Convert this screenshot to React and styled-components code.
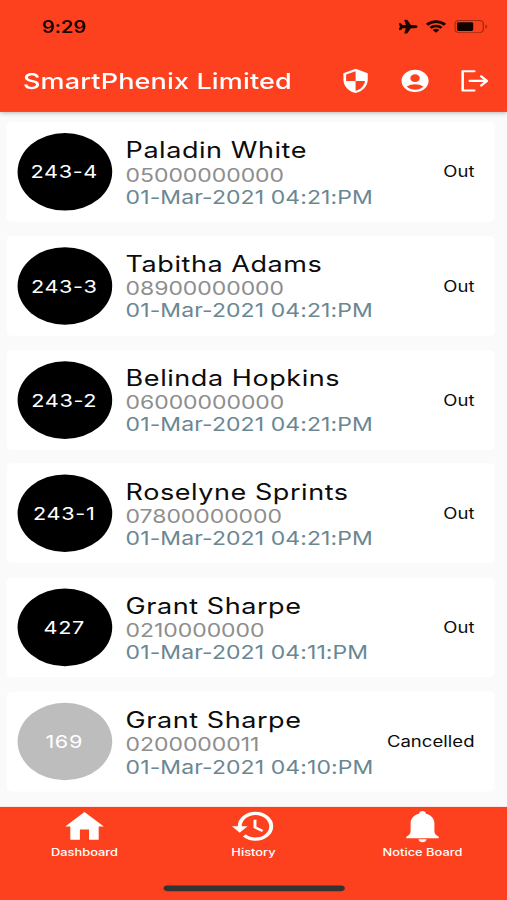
import React, { useState } from "react";
import styled, { createGlobalStyle } from "styled-components";
import { FaPlane } from "react-icons/fa";
import { MdAccountCircle, MdHistory, MdSecurity } from "react-icons/md";

const GlobalStyle = createGlobalStyle`
  * {
    box-sizing: border-box;
  }

  body {
    margin: 0;
    background: #fafafa;
  }
`;

const Viewport = styled.div`
  height: 900px;
  overflow: hidden;
`;

// 375x812 phone screen stretched over the whole window
const Screen = styled.div`
  width: 375px;
  height: 812px;
  display: flex;
  flex-direction: column;
  transform: scale(1.352, 1.10837);
  transform-origin: 0 0;
  background: #fafafa;
  font-family: Inter, "Liberation Sans", sans-serif;
  color: #0c0c0c;
`;

const Header = styled.header`
  flex: none;
  height: 100.5px;
  background: #fd411e;
  box-shadow: 0 1px 4px rgba(0, 0, 0, 0.35);
  z-index: 1;
`;

const StatusBar = styled.div`
  display: flex;
  align-items: center;
  height: 44px;
  padding: 4px 14px 0 31px;
  color: #1c0500;
`;

const Time = styled.span`
  flex: 1;
  font-size: 15px;
  font-weight: 600;
  letter-spacing: -0.1px;
`;

const StatusIcons = styled.div`
  display: flex;
  align-items: center;
  gap: 6px;

  & > svg {
    display: block;
  }
`;

const Toolbar = styled.div`
  display: flex;
  align-items: center;
  height: 57.5px;
  padding: 0 2px 0 17px;
  color: #fff;
`;

const Title = styled.h1`
  flex: 1;
  margin: 0;
  font-size: 20px;
  font-weight: 500;
  letter-spacing: 0.1px;
  white-space: nowrap;
`;

const ToolbarButton = styled.button`
  display: flex;
  align-items: center;
  justify-content: center;
  width: 44px;
  height: 44px;
  padding: 0;
  border: 0;
  background: none;
  color: inherit;
  cursor: pointer;
`;

const List = styled.main`
  flex: 1;
  display: flex;
  flex-direction: column;
  gap: 12.86px;
  min-height: 0;
  padding: 9.3px 9px 0 5px;
`;

const Card = styled.div`
  flex: none;
  display: flex;
  align-items: center;
  height: 90px;
  padding: 0 15px 0 7.5px;
  border-radius: 4px;
  background: #fff;
`;

const Badge = styled.div`
  flex: none;
  display: flex;
  align-items: center;
  justify-content: center;
  width: 70px;
  height: 70px;
  margin-right: 10.4px;
  border-radius: 50%;
  background: ${(props) => (props.$muted ? "#bdbdbd" : "#000")};
  color: #fff;
  font-size: 16px;
  letter-spacing: 0.5px;
`;

const Details = styled.div`
  flex: 1;
  min-width: 0;
  padding-top: 1.5px;
  white-space: nowrap;
`;

const Name = styled.div`
  font-size: 20px;
  line-height: 24px;
  letter-spacing: 0.4px;
`;

const Phone = styled.div`
  color: #8e8e8e;
  font-size: 17px;
  line-height: 20px;
  letter-spacing: -0.04px;
`;

const Timestamp = styled.div`
  color: #6a8793;
  font-size: 17px;
  line-height: 20px;
  letter-spacing: 0.07px;
`;

const Status = styled.span`
  font-size: 13.7px;
  letter-spacing: 0.03px;
`;

const BottomNav = styled.nav`
  flex: none;
  height: 84px;
  background: #fd411e;
  color: #fff;
`;

const Tabs = styled.div`
  display: flex;
  height: 72px;
`;

const Tab = styled.button`
  flex: 1;
  display: flex;
  flex-direction: column;
  align-items: center;
  padding: 0;
  border: 0;
  background: none;
  color: inherit;
  font: 500 9.5px/11px Inter, "Liberation Sans", sans-serif;
  cursor: pointer;
`;

const HomeIndicator = styled.div`
  width: 134px;
  height: 5px;
  margin: -1px auto 0;
  border-radius: 3px;
  background: #333;
`;

const WifiIcon = () => (
  <svg width="15" height="12" viewBox="0 0 22 17" preserveAspectRatio="none" fill="none" stroke="currentColor">
    <path d="M1.200 6.200a14 14 0 0 1 19.600 0" strokeWidth="3.400" />
    <path d="M5 10.200a8.600 8.600 0 0 1 12 0" strokeWidth="3.200" />
    <path d="M11 16.500L7.400 12.900a5 5 0 0 1 7.200 0z" fill="currentColor" stroke="none" />
  </svg>
);

const BatteryIcon = () => (
  <svg width="25" height="12" viewBox="0 0 25 12">
    <rect
      x="0.5"
      y="0.5"
      width="21"
      height="11"
      rx="3"
      fill="none"
      stroke="#a32b12"
    />
    <rect x="2" y="2" width="12" height="8" rx="1.3" fill="#120300" />
    <path d="M23 4v4c.9-.3 1.4-1.1 1.4-2S23.900 4.300 23 4z" fill="#a32b12" />
  </svg>
);

const LogoutIcon = () => (
  <svg
    width="21"
    height="20"
    viewBox="0 0 21 20"
    fill="none"
    stroke="currentColor"
    strokeWidth="1.9"
    strokeLinecap="round"
    strokeLinejoin="round"
  >
    <path d="M9.800 1.300H1.200v17.400h8.600" />
    <path d="M6.500 10h12.500" />
    <path d="M14.900 5.800l4.200 4.200-4.200 4.200" />
  </svg>
);

const HomeIcon = ({ size }) => (
  <svg width={size} height={size} viewBox="0 0 35 35" fill="currentColor">
    <path d="M17.500 4.700L31.800 17.700H28V29.600H20.900V20.400H14.100V29.600H7V17.700H3.200z" />
  </svg>
);

const BellIcon = ({ size }) => (
  <svg width={size} height={size} viewBox="0 0 35 35" fill="currentColor">
    <path d="M17.500 3.700c1.500 0 2.400 1 2.500 2.400 3.800 1.100 6.300 4.300 6.300 8.500v6.900c0 2.700.9 4 3.200 5.500v1.200H5.500V27c2.300-1.500 3.200-2.800 3.200-5.500v-6.900c0-4.200 2.500-7.400 6.300-8.500.1-1.400 1-2.400 2.500-2.400z" />
    <path d="M14.500 29.100h6c-.3 1.700-1.400 2.700-3 2.700s-2.700-1-3-2.700z" />
  </svg>
);

const visitors = [
  { id: "243-4", name: "Paladin White", phone: "05000000000", date: "01-Mar-2021 04:21:PM", status: "Out" },
  { id: "243-3", name: "Tabitha Adams", phone: "08900000000", date: "01-Mar-2021 04:21:PM", status: "Out" },
  { id: "243-2", name: "Belinda Hopkins", phone: "06000000000", date: "01-Mar-2021 04:21:PM", status: "Out" },
  { id: "243-1", name: "Roselyne Sprints", phone: "07800000000", date: "01-Mar-2021 04:21:PM", status: "Out" },
  { id: "427", name: "Grant Sharpe", phone: "0210000000", date: "01-Mar-2021 04:11:PM", status: "Out" },
  { id: "169", name: "Grant Sharpe", phone: "0200000011", date: "01-Mar-2021 04:10:PM", status: "Cancelled" },
];

const tabs = [
  { label: "Dashboard", Icon: HomeIcon },
  { label: "History", Icon: MdHistory },
  { label: "Notice Board", Icon: BellIcon },
];

const VisitorCard = ({ visitor }) => (
  <Card>
    <Badge $muted={visitor.status === "Cancelled"}>{visitor.id}</Badge>
    <Details>
      <Name>{visitor.name}</Name>
      <Phone>{visitor.phone}</Phone>
      <Timestamp>{visitor.date}</Timestamp>
    </Details>
    <Status>{visitor.status}</Status>
  </Card>
);

const App = () => {
  const [, setTab] = useState("Dashboard");

  return (
    <Viewport>
      <GlobalStyle />
      <Screen>
        <Header>
          <StatusBar>
            <Time>9:29</Time>
            <StatusIcons>
              <FaPlane size={14} />
              <WifiIcon />
              <BatteryIcon />
            </StatusIcons>
          </StatusBar>
          <Toolbar>
            <Title>SmartPhenix Limited</Title>
            <ToolbarButton>
              <MdSecurity size={24} />
            </ToolbarButton>
            <ToolbarButton>
              <MdAccountCircle size={24} />
            </ToolbarButton>
            <ToolbarButton>
              <LogoutIcon />
            </ToolbarButton>
          </Toolbar>
        </Header>
        <List>
          {visitors.map((visitor) => (
            <VisitorCard key={visitor.id} visitor={visitor} />
          ))}
        </List>
        <BottomNav>
          <Tabs>
            {tabs.map(({ label, Icon }) => (
              <Tab key={label} onClick={() => setTab(label)}>
                <Icon size={35} />
                {label}
              </Tab>
            ))}
          </Tabs>
          <HomeIndicator />
        </BottomNav>
      </Screen>
    </Viewport>
  );
};

export default App;
